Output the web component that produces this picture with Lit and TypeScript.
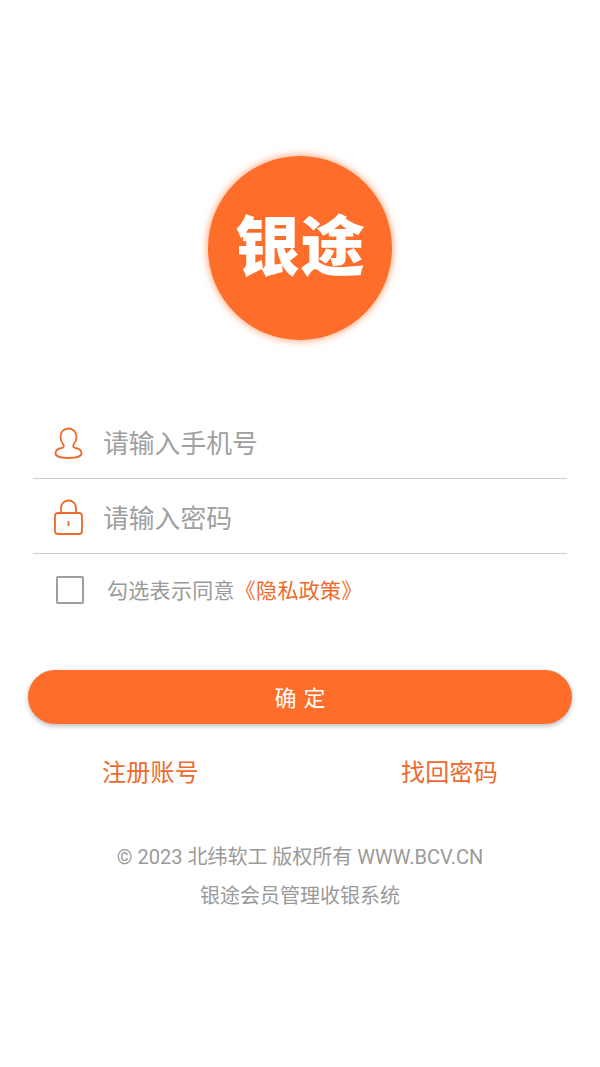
import { LitElement, css, html } from "lit";
import { customElement } from "lit/decorators.js";

@customElement("app-root")
export class AppRoot extends LitElement {
  static styles = css`
    :host {
      display: block;
      width: 600px;
      height: 1067px;
      overflow: hidden;
      background: #fff;
      font-family: Roboto, "Noto Sans CJK SC", "Noto Sans", sans-serif;
    }
    .page {
      display: flex;
      flex-direction: column;
      padding-top: 156px;
    }
    .logo {
      align-self: center;
      box-sizing: border-box;
      width: 184px;
      height: 184px;
      padding-top: 1px;
      border-radius: 50%;
      background: #ff6d2b;
      box-shadow: 0 0 6px 2px rgba(255, 130, 70, 0.55);
      display: flex;
      align-items: center;
      justify-content: center;
      color: #fff;
      font-size: 65px;
      font-weight: 900;
      line-height: 1;
    }
    .form {
      margin: 64px 33px 0;
    }
    .field {
      height: 74px;
      border-bottom: 1px solid #cfcfcf;
      display: flex;
      align-items: center;
      gap: 19px;
      padding-left: 19px;
      color: #a0a0a0;
      font-size: 25.8px;
      line-height: 1;
    }
    .field span {
      padding-top: 7px;
    }
    .field svg {
      width: 32px;
      height: 40px;
      flex: none;
    }
    .agree {
      display: flex;
      align-items: center;
      height: 74px;
      padding-left: 23px;
      padding-bottom: 1px;
      gap: 23px;
      font-size: 21px;
      letter-spacing: 0.3px;
      color: #9a9a9a;
    }
    .agree .label {
      margin-top: -4px;
    }
    .box {
      width: 24px;
      height: 24px;
      margin-top: -3px;
      border: 2px solid #9e9e9e;
      border-radius: 2px;
      flex: none;
    }
    .policy {
      color: #ec6a2c;
    }
    .submit {
      margin: 41px 28px 0;
      height: 54px;
      border-radius: 27px;
      background: #ff6d2b;
      box-shadow: 0 2px 5px rgba(0, 0, 0, 0.28);
      color: #fff;
      font-size: 22px;
      letter-spacing: 7px;
      padding-left: 7px;
      padding-bottom: 2px;
      box-sizing: border-box;
      display: flex;
      align-items: center;
      justify-content: center;
    }
    .links {
      display: flex;
      justify-content: space-between;
      padding: 0 102px;
      margin-top: 30px;
      font-size: 24px;
      letter-spacing: 0.25px;
      line-height: 38px;
      color: #ec6a2c;
    }
    .footer {
      margin-top: 46px;
      text-align: center;
      font-size: 20px;
      line-height: 39px;
      color: #9a9a9a;
    }
  `;

  render() {
    return html`
      <div class="page">
        <div class="logo">银途</div>
        <div class="form">
          <div class="field">
            <svg viewBox="0 0 32 40" fill="none" stroke="#ec6a2c" stroke-width="1.800">
              <path
                d="M16.500 7.500c-4.700 0-8 3.500-8 8.500 0 3 1.200 5.500 2.800 7.500 1 1.500.5 3-1.500 3.500C5.500 27.500 3.500 30 3.500 32.500c0 2.800 5.500 4.500 13 4.500s13-1.700 13-4.500c0-2.500-2-5-6.300-5.500-2-.5-2.500-2-1.500-3.500 1.600-2 2.800-4.500 2.800-7.500 0-5-3.300-8.500-8-8.500z"
              />
            </svg>
            <span>请输入手机号</span>
          </div>
          <div class="field">
            <svg viewBox="0 0 32 40" fill="none" stroke="#ec6a2c" stroke-width="1.800">
              <rect x="3" y="17" width="27" height="21" rx="3" />
              <path d="M9 17v-5a7.500 7.500 0 0 1 15 0v5" />
              <path d="M16.500 25v5" />
            </svg>
            <span>请输入密码</span>
          </div>
        </div>
        <div class="form" style="margin-top:0">
          <div class="agree">
            <div class="box"></div>
            <div class="label">勾选表示同意<span class="policy">《隐私政策》</span></div>
          </div>
        </div>
        <div class="submit">确定</div>
        <div class="links">
          <span>注册账号</span>
          <span>找回密码</span>
        </div>
        <div class="footer">
          <div>© 2023 北纬软工 版权所有 WWW.BCV.CN</div>
          <div>银途会员管理收银系统</div>
        </div>
      </div>
    `;
  }
}
